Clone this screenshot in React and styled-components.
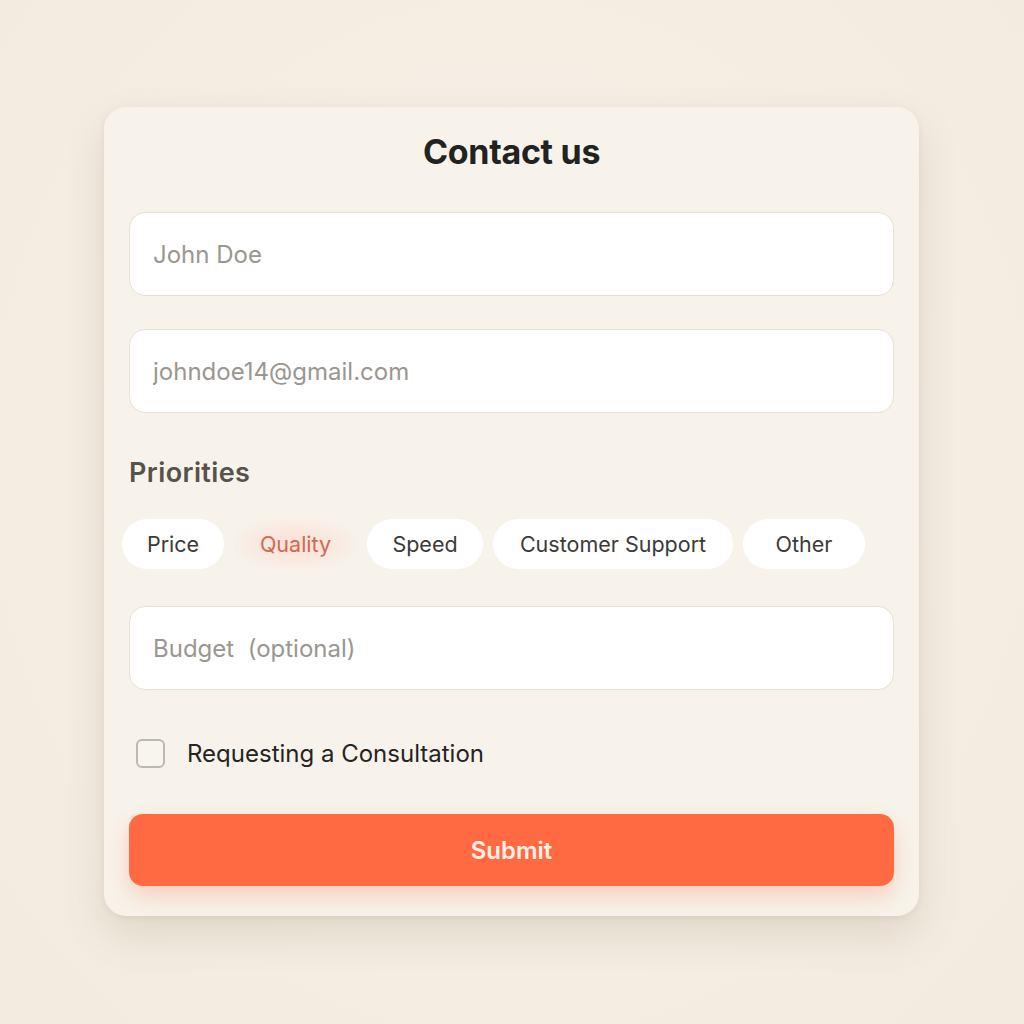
import React from "react";
import styled, { createGlobalStyle } from "styled-components";

const Global = createGlobalStyle`
  html, body { margin: 0; padding: 0; background: #f3ede2; }
  body { font-family: Inter, "Noto Sans", sans-serif; -webkit-font-smoothing: antialiased; }
  * { box-sizing: border-box; }
`;

const Page = styled.div`
  width: 1024px;
  height: 1024px;
  padding-top: 107px;
  background: radial-gradient(ellipse at 50% 45%, #f6f1e8 0%, #f2ebdf 100%);
`;

const Card = styled.form`
  width: 815px;
  margin: 0 0 0 104px;
  background: #f7f3eb;
  border-radius: 22px;
  padding: 25px 25px 30px;
  display: flex;
  flex-direction: column;
  box-shadow: 0 18px 40px rgba(120, 100, 70, 0.16), 0 2px 6px rgba(120, 100, 70, 0.08);
`;

const Title = styled.h1`
  margin: 0 0 40px;
  text-align: center;
  font-size: 34px;
  line-height: 40px;
  font-weight: 700;
  color: #222220;
  letter-spacing: -0.3px;
`;

const Field = styled.input`
  width: 100%;
  height: 84px;
  border: 1.5px solid #e8e0d2;
  border-radius: 16px;
  background: #ffffff;
  padding: 0 23px;
  font-family: inherit;
  font-size: 24px;
  color: #333;
  margin-bottom: ${(p) => p.$mb || 0}px;
  outline: none;
  &::placeholder { color: #9a9690; }
`;

const Label = styled.div`
  font-size: 27px;
  line-height: 30px;
  font-weight: 600;
  letter-spacing: 0.4px;
  color: #57514a;
  margin: 45px 0 31px;
`;

const ChipRow = styled.div`
  display: flex;
  gap: 10px;
  margin-left: -7px;
  margin-bottom: 37px;
`;

const Chip = styled.button`
  height: 50px;
  width: ${(p) => p.$w}px;
  border: none;
  border-radius: 25px;
  font-family: inherit;
  font-size: 21.5px;
  color: ${(p) => (p.$active ? "#d06a52" : "#3c3a37")};
  background: ${(p) =>
    p.$active
      ? "radial-gradient(ellipse at center, rgba(255,200,185,0.45) 0%, rgba(255,215,200,0.25) 55%, rgba(247,243,235,0) 80%)"
      : "#ffffff"};
  padding: 0;
  cursor: pointer;
`;

const CheckRow = styled.label`
  display: flex;
  align-items: center;
  gap: 22px;
  height: 30px;
  margin: 48px 0 46px 7px;
  font-size: 24px;
  color: #252422;
`;

const Box = styled.span`
  width: 29px;
  height: 29px;
  border: 2px solid #bdb8b0;
  border-radius: 6px;
  background: #f8f5ee;
`;

const Submit = styled.button`
  height: 72px;
  width: 100%;
  border: none;
  border-radius: 14px;
  background: #ff6a42;
  color: #fff1e8;
  font-family: inherit;
  font-size: 24px;
  font-weight: 600;
  box-shadow: 0 10px 22px rgba(255, 110, 70, 0.28);
  cursor: pointer;
`;

const chips = [
  ["Price", 102],
  ["Quality", 123],
  ["Speed", 116],
  ["Customer Support", 240],
  ["Other", 122],
];

export default function App() {
  return (
    <>
      <Global />
      <Page>
        <Card onSubmit={(e) => e.preventDefault()}>
          <Title>Contact us</Title>
          <Field placeholder="John Doe" $mb={33} />
          <Field placeholder="johndoe14@gmail.com" />
          <Label>Priorities</Label>
          <ChipRow>
            {chips.map(([c, w]) => (
              <Chip key={c} type="button" $w={w} $active={c === "Quality"}>
                {c}
              </Chip>
            ))}
          </ChipRow>
          <Field placeholder="Budget  (optional)" />
          <CheckRow>
            <Box />
            Requesting a Consultation
          </CheckRow>
          <Submit type="submit">Submit</Submit>
        </Card>
      </Page>
    </>
  );
}
